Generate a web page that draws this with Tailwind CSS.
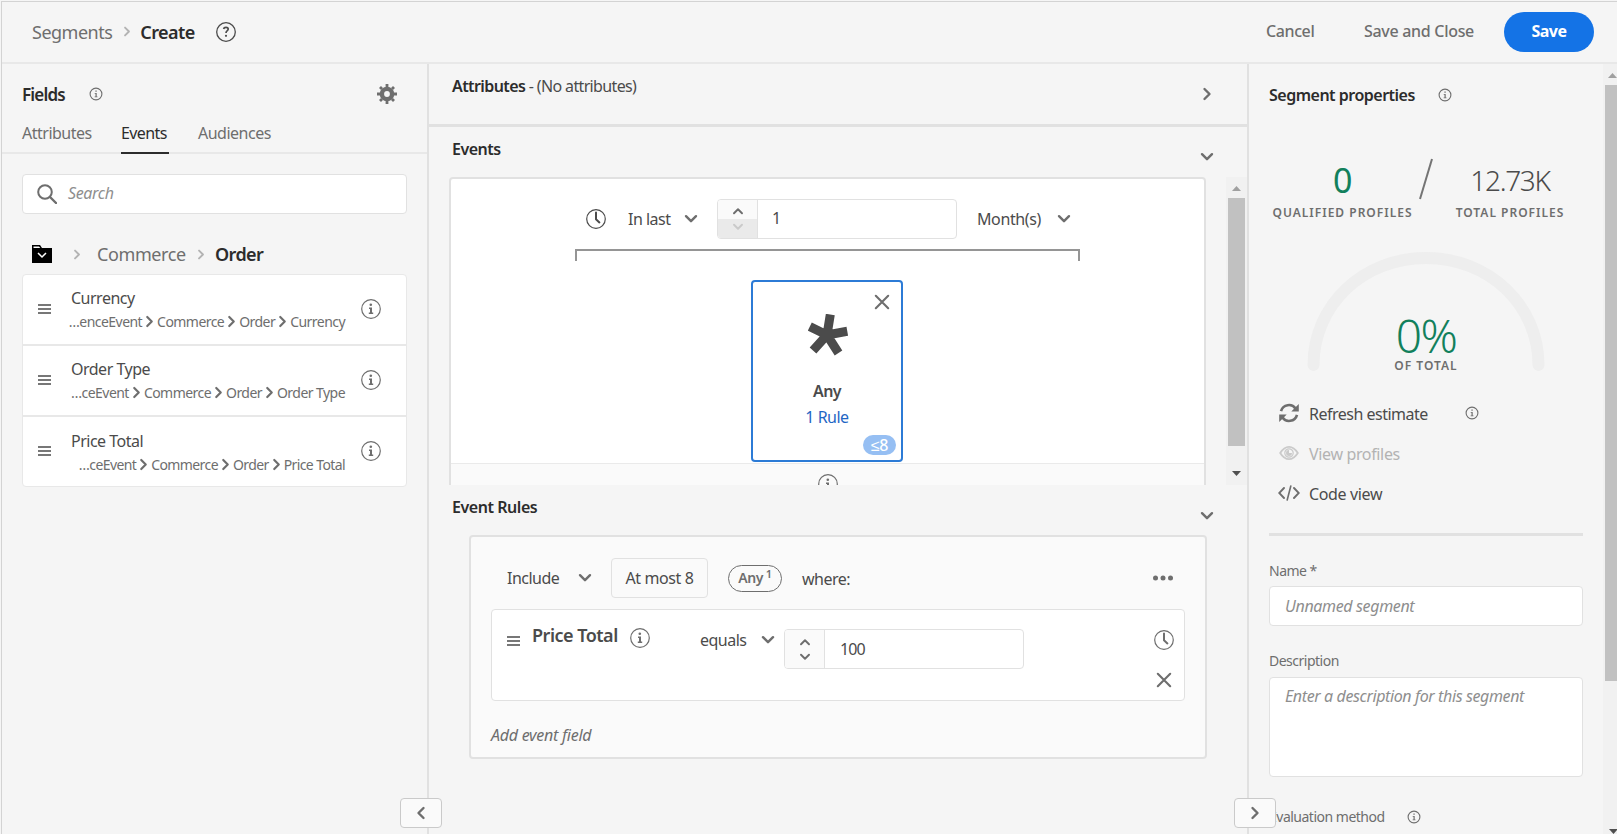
<!DOCTYPE html>
<html lang="en">
<head>
    <meta charset="UTF-8">
    <meta name="viewport" content="width=device-width, initial-scale=1.0">
    <title>Segments - Create</title>
    <script src="https://cdn.jsdelivr.net/npm/@tailwindcss/browser@4"></script>
</head>
<body class="h-screen overflow-hidden bg-[#f5f5f5] font-['Noto_Sans',sans-serif] text-base leading-[22px] tracking-[-0.5px] text-[#4b4b4b]">
    <!-- icons -->
    <svg class="hidden">
        <symbol id="info" viewBox="0 0 20 20">
            <circle cx="10" cy="10" r="9.3" fill="none" stroke="currentColor" stroke-width="1.2"/>
            <circle cx="9.8" cy="5.8" r="1.3" fill="currentColor"/>
            <path d="M8 8.5h3v5h1.2V15H7.8v-1.5H9V10H8z" fill="currentColor"/>
        </symbol>
        <symbol id="info-sm" viewBox="0 0 14 14">
            <circle cx="7" cy="7" r="5.9" fill="none" stroke="currentColor" stroke-width="1.1"/>
            <path d="M6.4 3.6h1.3v1.2H6.4zM5.7 6h2v3.5h.8v.8H5.6v-.8h.9V6.8h-.8z" fill="currentColor"/>
        </symbol>
        <symbol id="down" viewBox="0 0 14 10">
            <path d="M2 2.2l5 5 5-5" fill="none" stroke="currentColor" stroke-width="2.4" stroke-linecap="round" stroke-linejoin="round"/>
        </symbol>
        <symbol id="right" viewBox="0 0 10 14">
            <path d="M2.5 2l5 5-5 5" fill="none" stroke="currentColor" stroke-width="2.4" stroke-linecap="round" stroke-linejoin="round"/>
        </symbol>
        <symbol id="close" viewBox="0 0 16 16">
            <path d="M1.8 1.8l12.4 12.4M14.2 1.8L1.8 14.2" fill="none" stroke="currentColor" stroke-width="2.1" stroke-linecap="round"/>
        </symbol>
        <symbol id="clock" viewBox="0 0 20 20">
            <circle cx="10" cy="10" r="9.3" fill="none" stroke="currentColor" stroke-width="1.2"/>
            <path d="M10 3.6v6.6l3.4 3.2" fill="none" stroke="currentColor" stroke-width="2" stroke-linecap="round" stroke-linejoin="round"/>
        </symbol>
        <symbol id="grip" viewBox="0 0 13 10">
            <path d="M0 1h13M0 5h13M0 9h13" stroke="currentColor" stroke-width="1.4"/>
        </symbol>
    </svg>

    <div class="flex h-full flex-col border-t border-[#d3d3d3] mt-px border-l ml-px">
        <header class="flex h-[62px] shrink-0 items-center border-b-2 border-[#e8e8e8] pl-[30px] pr-[23px] pb-px">
            <span class="text-lg text-[#6e6e6e]">Segments</span>
            <svg class="ml-[11px] h-[11px] w-2 text-[#b3b3b3]"><use href="#right"/></svg>
            <span class="ml-[9px] w-[56px] text-lg font-semibold tracking-[-0.6px] text-[#2c2c2c]">Create</span>
            <svg class="ml-5 size-5 text-[#4b4b4b]" viewBox="0 0 20 20" fill="none" stroke="currentColor">
                <circle cx="10" cy="10" r="9.3" stroke-width="1.3"/>
                <path d="M7.6 7q.3-1.7 2.4-1.7 2.2 0 2.2 1.8 0 1-1.1 1.8t-1.1 2" stroke-width="1.7"/>
                <circle cx="10" cy="13.8" r="1.1" fill="currentColor" stroke="none"/>
            </svg>
            <span class="ml-auto w-[50px] pb-px font-medium tracking-[-0.4px] text-[#6e6e6e]">Cancel</span>
            <span class="ml-[48px] w-[112px] whitespace-nowrap pb-px font-medium tracking-[-0.3px] text-[#6e6e6e]">Save and Close</span>
            <button class="ml-[28px] h-10 w-[90px] rounded-full bg-[#1473e6] pb-px font-bold text-white">Save</button>
        </header>

        <div class="flex min-h-0 flex-1">
            <!-- fields -->
            <aside class="relative w-[427px] shrink-0 border-r-2 border-[#e1e1e1]">
                <div class="flex h-[51px] items-center pl-5 pr-[30px] pt-[9px]">
                    <span class="w-[43px] pt-0.5 text-[17px] font-semibold tracking-[-0.8px] text-[#2c2c2c]">Fields</span>
                    <svg class="ml-[24px] size-[14px] text-[#6e6e6e]"><use href="#info-sm"/></svg>
                    <svg class="ml-auto size-5 text-[#6e6e6e]" viewBox="-10 -10 20 20" fill="none" stroke="currentColor">
                        <circle r="5.1" stroke-width="4.4"/>
                        <path d="M0-10v3M0 10V7M-10 0h3M10 0H7M-7-7l2 2M7-7L5-5M-7 7l2-2M7 7L5 5" stroke-width="2.8"/>
                    </svg>
                </div>
                <nav class="flex h-[39px] gap-[30px] border-b-2 border-[#e8e8e8] pl-5 pt-[7px] text-[#6e6e6e]">
                    <span class="w-[69px]">Attributes</span>
                    <span class="h-8 w-12 border-b-2 border-[#2c2c2c] tracking-[-0.6px] text-[#2c2c2c]">Events</span>
                    <span class="-ml-px">Audiences</span>
                </nav>
                <div class="px-5 pt-5">
                    <div class="flex h-10 w-[385px] items-center rounded border border-[#e1e1e1] bg-white pl-[14px]">
                        <svg class="size-5 text-[#6e6e6e]" viewBox="0 0 20 20" fill="none" stroke="currentColor" stroke-width="2">
                            <circle cx="8" cy="8" r="6.8"/>
                            <path d="M13 13l6 6" stroke-width="2.4" stroke-linecap="round"/>
                        </svg>
                        <span class="ml-[11px] pb-0.5 italic tracking-[-0.35px] text-[#8e8e8e]">Search</span>
                    </div>
                    <div class="flex h-[60px] items-center pl-[10px] pt-5 text-lg text-[#6e6e6e]">
                        <svg class="h-[18px] w-5" viewBox="0 0 20 18">
                            <path d="M0 0h8l2 3h10v15H0z" fill="#000"/>
                            <path d="M1.5 3V1.5H7L8.3 3z" fill="#fff"/>
                            <path d="M6 8l4 4 4-4" fill="none" stroke="#fff" stroke-width="1.5"/>
                        </svg>
                        <svg class="ml-[21px] h-[11px] w-2 text-[#b3b3b3]"><use href="#right"/></svg>
                        <span class="ml-[16px] w-[89px] tracking-[-0.4px]">Commerce</span>
                        <svg class="ml-[11px] h-[11px] w-2 text-[#b3b3b3]"><use href="#right"/></svg>
                        <span class="ml-[10px] font-semibold tracking-[-0.6px] text-[#2c2c2c]">Order</span>
                    </div>
                    <ul class="w-[385px] divide-y-2 divide-[#e8e8e8] rounded border border-[#e8e8e8] bg-white">
                        <li class="flex h-[71px] items-center pl-[15px]">
                            <svg class="mb-px h-[10px] w-[13px]"><use href="#grip"/></svg>
                            <div class="ml-5 w-[274px] pt-px leading-[23px]">
                                <p>Currency</p>
                                <p class="flex items-center justify-end gap-[3px] whitespace-nowrap text-sm leading-[23px] tracking-[-0.55px] text-[#6e6e6e]">…enceEvent<svg class="h-[13px] w-[9px] shrink-0"><use href="#right"/></svg>Commerce<svg class="h-[13px] w-[9px] shrink-0"><use href="#right"/></svg>Order<svg class="h-[13px] w-[9px] shrink-0"><use href="#right"/></svg>Currency</p>
                            </div>
                            <svg class="mb-0.5 ml-4 size-5 text-[#6e6e6e]"><use href="#info"/></svg>
                        </li>
                        <li class="flex h-[71px] items-center pl-[15px]">
                            <svg class="mb-px h-[10px] w-[13px]"><use href="#grip"/></svg>
                            <div class="ml-5 w-[274px] pt-px leading-[23px]">
                                <p>Order Type</p>
                                <p class="flex items-center justify-end gap-[3px] whitespace-nowrap text-sm leading-[23px] tracking-[-0.55px] text-[#6e6e6e]">…ceEvent<svg class="h-[13px] w-[9px] shrink-0"><use href="#right"/></svg>Commerce<svg class="h-[13px] w-[9px] shrink-0"><use href="#right"/></svg>Order<svg class="h-[13px] w-[9px] shrink-0"><use href="#right"/></svg>Order Type</p>
                            </div>
                            <svg class="mb-px ml-4 size-5 text-[#6e6e6e]"><use href="#info"/></svg>
                        </li>
                        <li class="flex h-[69px] items-center pl-[15px]">
                            <svg class="mb-px h-[10px] w-[13px]"><use href="#grip"/></svg>
                            <div class="ml-5 w-[274px] pt-[2px] leading-[23px]">
                                <p>Price Total</p>
                                <p class="flex items-center justify-end gap-[3px] whitespace-nowrap text-sm leading-[23px] tracking-[-0.6px] text-[#6e6e6e]">…ceEvent<svg class="h-[13px] w-[9px] shrink-0"><use href="#right"/></svg>Commerce<svg class="h-[13px] w-[9px] shrink-0"><use href="#right"/></svg>Order<svg class="h-[13px] w-[9px] shrink-0"><use href="#right"/></svg>Price Total</p>
                            </div>
                            <svg class="mb-px ml-4 size-5 text-[#6e6e6e]"><use href="#info"/></svg>
                        </li>
                    </ul>
                </div>
                <button class="absolute left-[398px] top-[734px] z-10 flex h-[30px] w-[42px] items-center justify-center rounded border border-[#cacaca] bg-[#fafafa]">
                    <svg class="h-[14px] w-[10px] rotate-180 text-[#6e6e6e]"><use href="#right"/></svg>
                </button>
            </aside>

            <!-- canvas -->
            <main class="w-[818px] shrink-0">
                <div class="flex h-[63px] justify-between border-b-3 border-[#e1e1e1] pl-[23px] pr-[35px]">
                    <p class="pt-[11px]"><b class="font-semibold tracking-[-0.6px] text-[#2c2c2c]">Attributes</b> <span class="tracking-[-0.65px]">- (No attributes)</span></p>
                    <svg class="mt-[23px] h-[14px] w-[10px] text-[#6e6e6e]"><use href="#right"/></svg>
                </div>
                <div class="flex h-[50px] justify-between pl-[23px] pr-[33px]">
                    <b class="pt-[11px] font-semibold tracking-[-0.5px] text-[#2c2c2c]">Events</b>
                    <svg class="mt-[25px] h-[10px] w-[14px] text-[#6e6e6e]"><use href="#down"/></svg>
                </div>
                <div class="flex h-[308px] justify-between overflow-hidden pl-5">
                    <div class="h-[340px] w-[757px] shrink-0 rounded border-2 border-[#e1e1e1] bg-white">
                        <div class="flex h-[70px] items-center pl-[135px] pt-[9px]">
                            <svg class="size-5"><use href="#clock"/></svg>
                            <span class="ml-[22px] w-[43px]">In last</span>
                            <svg class="ml-[13px] h-[10px] w-[14px] text-[#6e6e6e]"><use href="#down"/></svg>
                            <div class="ml-[19px] flex h-10 w-[240px] overflow-hidden rounded border border-[#e1e1e1]">
                                <div class="w-10 border-r border-[#e1e1e1] bg-[#fafafa]">
                                    <div class="flex h-[19px] items-center justify-center pt-1"><svg class="h-2 w-3 rotate-180 text-[#6e6e6e]"><use href="#down"/></svg></div>
                                    <div class="flex h-5 justify-center bg-[#eaeaea] pt-1"><svg class="h-2 w-3 text-[#cacaca]"><use href="#down"/></svg></div>
                                </div>
                                <span class="pl-[14px] pt-[7px]">1</span>
                            </div>
                            <span class="ml-[20px] w-[67px] tracking-[-0.4px]">Month(s)</span>
                            <svg class="ml-[13px] h-[10px] w-[14px] text-[#6e6e6e]"><use href="#down"/></svg>
                        </div>
                        <div class="ml-[124px] h-3 w-[505px] border-2 border-b-0 border-[#959595]"></div>
                        <div class="relative ml-[300px] mt-[19px] flex h-[182px] w-[152px] flex-col items-center rounded border-2 border-[#2c7bd6]">
                            <svg class="absolute right-[11px] top-3 size-4 text-[#6e6e6e]"><use href="#close"/></svg>
                            <svg class="mt-8 h-[42px] w-10 translate-x-px" viewBox="0 0 40 42" stroke="#4b4b4b" stroke-width="9">
                                <path d="M19 21L22.300 .5M19 21L39.300 17.300M19 21L30.500 39M19 21L5 36.500M19 21L1.800 12.500" fill="none"/>
                            </svg>
                            <b class="mt-6 font-semibold">Any</b>
                            <span class="mt-1 text-[#1f66c4]">1 Rule</span>
                            <span class="absolute bottom-[5px] right-[5px] h-5 w-[33px] rounded-full bg-[#96bff3] text-center text-base font-medium leading-[21px] text-white">≤8</span>
                        </div>
                        <div class="mt-px flex h-12 justify-center border-t border-[#eaeaea] bg-[#fafafa] pt-[10px]">
                            <svg class="size-5 text-[#6e6e6e]"><use href="#info"/></svg>
                        </div>
                    </div>
                    <div class="flex w-[21px] flex-col items-center bg-[#f1f1f1]">
                        <svg class="h-[21px] w-[9px]" viewBox="0 0 9 21"><path d="M0 14l4.500-5 4.500 5z" fill="#a0a0a0"/></svg>
                        <div class="h-[248px] w-[17px] bg-[#c1c1c1]"></div>
                        <svg class="mt-auto h-[21px] w-[9px]" viewBox="0 0 9 21"><path d="M0 7l4.500 5L9 7z" fill="#505050"/></svg>
                    </div>
                </div>
                <div class="flex h-[50px] justify-between pl-[23px] pr-[33px]">
                    <b class="pt-[11px] font-semibold tracking-[-0.45px] text-[#2c2c2c]">Event Rules</b>
                    <svg class="mt-[26px] h-[10px] w-[14px] text-[#6e6e6e]"><use href="#down"/></svg>
                </div>
                <div class="ml-10 h-[224px] w-[738px] rounded border-2 border-[#e1e1e1] bg-[#fafafa] px-5 pt-[21px]">
                    <div class="flex h-10 items-center pl-4">
                        <span class="w-[52px]">Include</span>
                        <svg class="ml-[19px] h-[10px] w-[14px] text-[#6e6e6e]"><use href="#down"/></svg>
                        <span class="ml-[19px] h-10 w-[97px] rounded border border-[#e1e1e1] text-center leading-[38px] tracking-[-0.4px]">At most 8</span>
                        <span class="ml-5 h-[27px] w-[54px] rounded-full border border-[#6e6e6e] text-center text-sm font-semibold leading-[24px] text-[#6e6e6e]">Any<span class="relative -top-[5px] ml-[3px] text-[11px]">1</span></span>
                        <span class="ml-5 pt-[2px]">where:</span>
                        <svg class="ml-auto mr-3 h-[6px] w-5 fill-[#6e6e6e]" viewBox="0 0 20 6"><circle cx="2.500" cy="3" r="2.500"/><circle cx="10" cy="3" r="2.500"/><circle cx="17.500" cy="3" r="2.500"/></svg>
                    </div>
                    <div class="mt-[11px] flex h-[92px] w-[694px] items-start rounded border border-[#e1e1e1] bg-white pl-[15px] pr-[10px]">
                        <svg class="mt-[26px] h-[10px] w-[13px]"><use href="#grip"/></svg>
                        <span class="ml-3 mt-[13px] w-[88px] whitespace-nowrap text-lg font-semibold leading-6 tracking-[-0.5px]">Price Total</span>
                        <svg class="ml-[10px] mt-[18px] size-5 text-[#6e6e6e]"><use href="#info"/></svg>
                        <span class="ml-[50px] mt-[19px] w-[47px]">equals</span>
                        <svg class="ml-[14px] mt-[25px] h-[10px] w-[14px] text-[#6e6e6e]"><use href="#down"/></svg>
                        <div class="ml-[9px] mt-[19px] flex h-10 w-[240px] overflow-hidden rounded border border-[#e1e1e1]">
                            <div class="flex w-10 flex-col items-center gap-[7px] border-r border-[#e1e1e1] bg-[#fafafa] pt-2 text-[#6e6e6e]">
                                <svg class="h-2 w-3 rotate-180"><use href="#down"/></svg>
                                <svg class="h-2 w-3"><use href="#down"/></svg>
                            </div>
                            <span class="pl-[15px] pt-2 tracking-[-0.9px]">100</span>
                        </div>
                        <div class="ml-auto flex flex-col items-center gap-[22px] pt-[20px] text-[#6e6e6e]">
                            <svg class="size-5"><use href="#clock"/></svg>
                            <svg class="size-4"><use href="#close"/></svg>
                        </div>
                    </div>
                    <p class="mt-[23px] italic tracking-[-0.25px] text-[#6e6e6e]">Add event field</p>
                </div>
            </main>

            <!-- segment properties -->
            <aside class="relative flex min-w-0 flex-1 border-l-2 border-[#e1e1e1]">
                <div class="w-[354px] shrink-0 overflow-hidden pl-5 pr-5">
                    <div class="flex h-[51px] items-center pt-[10px]">
                        <span class="w-[147px] whitespace-nowrap font-semibold text-[#2c2c2c]">Segment properties</span>
                        <svg class="ml-[22px] size-[14px] text-[#6e6e6e]"><use href="#info-sm"/></svg>
                    </div>
                    <div class="flex h-[110px] items-end pl-1 text-xs font-semibold text-[#6e6e6e]">
                        <div class="flex w-[139px] flex-col items-center whitespace-nowrap">
                            <span class="text-[34px] font-normal leading-[42px] text-[#12805c]">0</span>
                            <span class="h-6 pt-1 tracking-[1px]">QUALIFIED PROFILES</span>
                        </div>
                        <svg class="ml-[7px] mb-[25px] h-[42px] w-[14px]" viewBox="0 0 14 42"><path d="M1 41L13 1" stroke="#747474" stroke-width="2"/></svg>
                        <div class="ml-[22px] flex w-[110px] flex-col items-center whitespace-nowrap">
                            <span class="text-[28px] font-light leading-[41px] tracking-[-1.3px] text-[#4b4b4b]">12.73K</span>
                            <span class="h-6 pt-1 tracking-[1px]">TOTAL PROFILES</span>
                        </div>
                    </div>
                    <div class="relative mt-[26px] h-[124px] w-[314px]">
                        <svg class="h-[124px] w-[314px]" viewBox="0 0 314 124" fill="none"><path d="M44.500 114C44.500 54 94 7 157 7S269.500 54 269.500 114" stroke="#eee" stroke-width="12" stroke-linecap="round"/></svg>
                        <div class="absolute inset-x-0 top-[62px] text-center">
                            <p class="h-[45px] text-[46px] font-light leading-[45px] tracking-[-1.5px] text-[#12805c]">0%</p>
                            <p class="text-xs font-semibold leading-4 tracking-[1px] text-[#6e6e6e]">OF TOTAL</p>
                        </div>
                    </div>
                    <div class="mt-[18px] pl-[10px]">
                        <div class="flex h-10 items-center">
                            <svg class="size-5 text-[#6e6e6e]" viewBox="0 0 20 20" fill="none" stroke="currentColor" stroke-width="2.600">
                                <path d="M2 8.200C4 1 13 .2 16.500 5.500M18 11.800C16 19 7 19.800 3.500 14.500"/>
                                <path d="M19.800 1v7.500h-7.500zM.2 19v-7.500h7.500z" fill="currentColor" stroke="none"/>
                            </svg>
                            <span class="ml-[10px] w-[118px] whitespace-nowrap pt-0.5">Refresh estimate</span>
                            <svg class="ml-[38px] size-[14px] text-[#6e6e6e]"><use href="#info-sm"/></svg>
                        </div>
                        <div class="flex h-10 items-center text-[#b3b3b3]">
                            <svg class="size-5 text-[#cacaca]" viewBox="0 0 20 20">
                                <path d="M1.200 10Q5 3.800 10 3.800T18.800 10Q15 16.200 10 16.200T1.200 10z" fill="none" stroke="currentColor" stroke-width="1.800"/>
                                <circle cx="10" cy="10" r="4.200" fill="none" stroke="currentColor" stroke-width="1.200"/>
                                <path d="M10 7a3 3 0 1 0 3 3h-3z" fill="currentColor"/>
                            </svg>
                            <span class="ml-[10px] pt-0.5 tracking-[-0.35px]">View profiles</span>
                        </div>
                        <div class="flex h-10 items-center">
                            <svg class="-ml-px h-4 w-[22px] text-[#6e6e6e]" viewBox="0 0 22 16" fill="none" stroke="currentColor" stroke-width="1.900" stroke-linecap="round">
                                <path d="M6 3L1.200 8 6 13M16 3l4.800 5L16 13"/><path d="M12.800 1L9.200 15" stroke-width="1.600"/>
                            </svg>
                            <span class="ml-[9px] pt-0.5 tracking-[-0.35px]">Code view</span>
                        </div>
                    </div>
                    <div class="mt-[20px] h-[3px] bg-[#e1e1e1]"></div>
                    <p class="mt-[24px] h-[26px] text-sm leading-[21px] text-[#6e6e6e]">Name *</p>
                    <div class="h-10 rounded border border-[#e1e1e1] bg-white pl-[15px] pt-2 italic tracking-[-0.35px] text-[#8e8e8e]">Unnamed segment</div>
                    <p class="mt-[25px] h-[26px] text-sm leading-[20px] text-[#6e6e6e]">Description</p>
                    <div class="h-[100px] rounded border border-[#e1e1e1] bg-white pl-[15px] pt-[7px] italic tracking-[-0.38px] text-[#8e8e8e]">Enter a description for this segment</div>
                    <div class="mt-[29px] flex items-center text-sm leading-[22px] text-[#6e6e6e]">
                        <span class="w-[116px] whitespace-nowrap">Evaluation method</span>
                        <svg class="ml-[22px] size-[14px]"><use href="#info-sm"/></svg>
                    </div>
                </div>
                <div class="flex min-w-0 flex-1 flex-col overflow-hidden bg-[#f1f1f1] pl-[2px]">
                    <svg class="ml-[3px] h-[21px] w-[9px] shrink-0" viewBox="0 0 9 21"><path d="M0 14l4.500-5 4.500 5z" fill="#a0a0a0"/></svg>
                    <div class="h-[596px] bg-[#c1c1c1]"></div>
                    <svg class="ml-[4px] mt-auto mb-px h-[5px] w-[9px] shrink-0" viewBox="0 0 9 5"><path d="M0 0l4.500 5L9 0z" fill="#505050"/></svg>
                </div>
                <button class="absolute -left-[15px] top-[734px] z-10 flex h-[30px] w-[42px] items-center justify-center rounded border border-[#cacaca] bg-[#fafafa]">
                    <svg class="h-[14px] w-[10px] text-[#6e6e6e]"><use href="#right"/></svg>
                </button>
            </aside>
        </div>
    </div>
</body>
</html>
